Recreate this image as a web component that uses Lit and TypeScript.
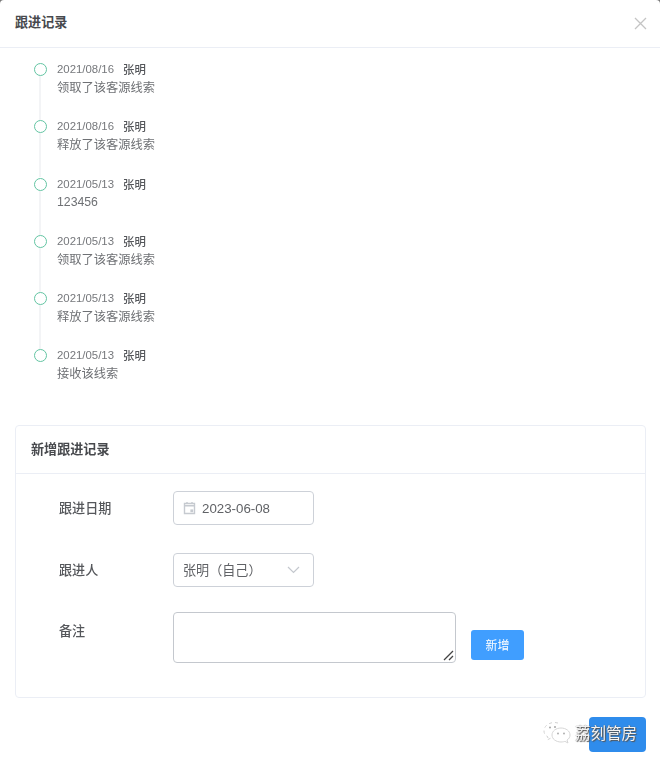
import { LitElement, html, css, svg } from 'lit';
import { customElement } from 'lit/decorators.js';

const records = [
  { date: '2021/08/16', name: '张明', text: '领取了该客源线索' },
  { date: '2021/08/16', name: '张明', text: '释放了该客源线索' },
  { date: '2021/05/13', name: '张明', text: '123456' },
  { date: '2021/05/13', name: '张明', text: '领取了该客源线索' },
  { date: '2021/05/13', name: '张明', text: '释放了该客源线索' },
  { date: '2021/05/13', name: '张明', text: '接收该线索' },
];

const closeIcon = svg`<path d="M1 1 L12 12 M12 1 L1 12" stroke="#c4c4c4" stroke-width="1.3" fill="none"/>`;
const calendarIcon = svg`<path d="M1.5 2.5 H11.5 V12.5 H1.5 Z M1.5 4.8 H11.5 M4 1 V3 M9 1 V3" stroke="#c6cad0" stroke-width="1.4" fill="none"/><rect x="7.4" y="8.4" width="2.8" height="2.8" fill="#c6cad0"/>`;
const chevronIcon = svg`<path d="M1 1 L6.5 6.5 L12 1" stroke="#c4c8ce" stroke-width="1.2" fill="none"/>`;
const grip = svg`<path d="M1 10 L10 1 M6 10 L10 6" stroke="#444" stroke-width="1.3" fill="none"/>`;
const wechatIcon = svg`
  <path d="M17 4 C10 2 3 6 3 12 C3 15 5 17 7 18 L6 21 L10 19 C12 20 14 20 16 19.5" stroke="#d2d2d2" stroke-width="1" stroke-dasharray="3 3" fill="none"/>
  <path d="M20 9 C15 9 11 12 11 16 C11 20 15 23 20 23 C22 23 23 22.6 24 22.4 L27 24 L26 21 C28 20 29 18 29 16 C29 12 25 9 20 9 Z" stroke="#d6d6d6" stroke-width="1" fill="#fff"/>
  <circle cx="9" cy="8.5" r="1" fill="#a8a8a8"/><circle cx="14" cy="8" r="1" fill="#a8a8a8"/>
  <circle cx="17" cy="14.5" r="0.9" fill="#a8a8a8"/><circle cx="23" cy="14.5" r="0.9" fill="#a8a8a8"/>`;

@customElement('app-root')
export class AppRoot extends LitElement {
  static styles = css`
    :host {
      display: block;
      width: 660px;
      height: 763px;
      background: #777;
      font-family: "Liberation Sans", "Noto Sans CJK SC", sans-serif;
      color: #606266;
      overflow: hidden;
    }
    .dialog {
      position: relative;
      height: 763px;
      box-sizing: border-box;
      background: #fff;
      border-radius: 4px 4px 0 0;
      display: flex;
      flex-direction: column;
      filter: blur(0.3px);
    }
    .head {
      flex: none;
      display: flex;
      align-items: center;
      justify-content: space-between;
      padding: 0 13px 4px 15px;
      height: 43px;
      border-bottom: 1px solid #ebeef5;
    }
    .title {
      font-size: 13.1px;
      font-weight: 700;
      color: #47494d;
    }
    .head svg {
      width: 13px;
      height: 13px;
      margin-top: 4px;
    }
    .timeline {
      flex: none;
      height: 377px;
      box-sizing: border-box;
      padding: 12px 0 0 34px;
    }
    .item {
      position: relative;
      height: 57.3px;
      display: flex;
      gap: 10px;
    }
    .item:not(:last-child)::before {
      content: '';
      position: absolute;
      left: 5px;
      top: 16px;
      height: 44px;
      width: 2px;
      background: #f3f4f6;
    }
    .dot {
      flex: none;
      width: 13px;
      height: 13px;
      margin-top: 3px;
      box-sizing: border-box;
      border: 1.6px solid #62c4a2;
      border-radius: 50%;
      background: #fff;
    }
    .meta {
      height: 18px;
      display: flex;
      align-items: center;
      font-size: 11.4px;
      color: #76787c;
    }
    .meta b {
      margin-left: 9px;
      font-weight: 500;
      color: #55575b;
    }
    .text {
      height: 18px;
      padding-top: 1px;
      line-height: 18px;
      font-size: 12.25px;
      color: #6e7074;
    }
    .text.num {
      padding-top: 0;
    }
    .card {
      flex: none;
      margin: 0 14px 0 15px;
      height: 273px;
      box-sizing: border-box;
      border: 1px solid #ebeef5;
      border-radius: 4px;
    }
    .card-head {
      height: 48px;
      box-sizing: border-box;
      display: flex;
      align-items: center;
      padding: 0 0 3px 15px;
      border-bottom: 1px solid #ebeef5;
      font-size: 13.1px;
      font-weight: 700;
      color: #47494d;
    }
    .form {
      display: flex;
      flex-direction: column;
      padding: 17px 0 0 43px;
    }
    .row {
      display: flex;
      align-items: center;
      margin-bottom: 28px;
    }
    .row.notes {
      align-items: flex-start;
      margin: -3px 0 0;
    }
    .label {
      width: 114px;
      padding-bottom: 2px;
      font-size: 13.1px;
      font-weight: 500;
      color: #55575b;
    }
    .notes .label {
      padding-top: 9px;
    }
    .field {
      width: 141px;
      height: 34px;
      box-sizing: border-box;
      display: flex;
      align-items: center;
      border: 1px solid #cdd1d8;
      border-radius: 4px;
      font-size: 13.1px;
      color: #606266;
    }
    .date {
      padding-left: 9px;
      gap: 6px;
    }
    .date svg {
      width: 13px;
      height: 14px;
    }
    .date span {
      font-size: 13.3px;
    }
    .select {
      padding: 0 13px 0 9px;
      justify-content: space-between;
    }
    .select span {
      padding-bottom: 1px;
    }
    .select svg {
      width: 13px;
      height: 8px;
    }
    .area {
      position: relative;
      width: 283px;
      height: 51px;
      box-sizing: border-box;
      border: 1px solid #c4c8ce;
      border-radius: 4px;
    }
    .area svg {
      position: absolute;
      right: 1px;
      bottom: 1px;
      width: 11px;
      height: 11px;
    }
    .add {
      width: 53px;
      height: 30px;
      margin: 18px 0 0 15px;
      padding-bottom: 2px;
      box-sizing: border-box;
      display: flex;
      align-items: center;
      justify-content: center;
      background: #409eff;
      border-radius: 3px;
      color: #fff;
      font-size: 12px;
    }
    .foot {
      flex: none;
      display: flex;
      justify-content: flex-end;
      padding: 19px 14px 0 0;
    }
    .confirm {
      width: 57px;
      height: 35px;
      background: #2f8cec;
      border-radius: 4px;
    }
    .mark {
      position: absolute;
      left: 541px;
      top: 719px;
      display: flex;
      align-items: center;
      gap: 4px;
      font-size: 15.5px;
      color: #f2f2f2;
      text-shadow: 1px 1px 1px #555, 0 0 1px #555;
    }
    .mark svg {
      width: 30px;
      height: 26px;
    }
  `;

  render() {
    return html`
      <div class="dialog">
        <div class="head">
          <span class="title">跟进记录</span>
          <svg viewBox="0 0 13 13">${closeIcon}</svg>
        </div>
        <div class="timeline">
          ${records.map(
            (r) => html`
              <div class="item">
                <div class="dot"></div>
                <div>
                  <div class="meta">${r.date}<b>${r.name}</b></div>
                  <div class="text ${/^\d+$/.test(r.text) ? 'num' : ''}">${r.text}</div>
                </div>
              </div>
            `
          )}
        </div>
        <div class="card">
          <div class="card-head">新增跟进记录</div>
          <div class="form">
            <div class="row">
              <span class="label">跟进日期</span>
              <div class="field date">
                <svg viewBox="0 0 13 14">${calendarIcon}</svg>
                <span>2023-06-08</span>
              </div>
            </div>
            <div class="row">
              <span class="label">跟进人</span>
              <div class="field select">
                <span>张明（自己）</span>
                <svg viewBox="0 0 13 8">${chevronIcon}</svg>
              </div>
            </div>
            <div class="row notes">
              <span class="label">备注</span>
              <div class="area"><svg viewBox="0 0 11 11">${grip}</svg></div>
              <div class="add">新增</div>
            </div>
          </div>
        </div>
        <div class="foot"><div class="confirm"></div></div>
        <div class="mark">
          <svg viewBox="0 0 30 26">${wechatIcon}</svg>
          <span>荔刻管房</span>
        </div>
      </div>
    `;
  }
}
